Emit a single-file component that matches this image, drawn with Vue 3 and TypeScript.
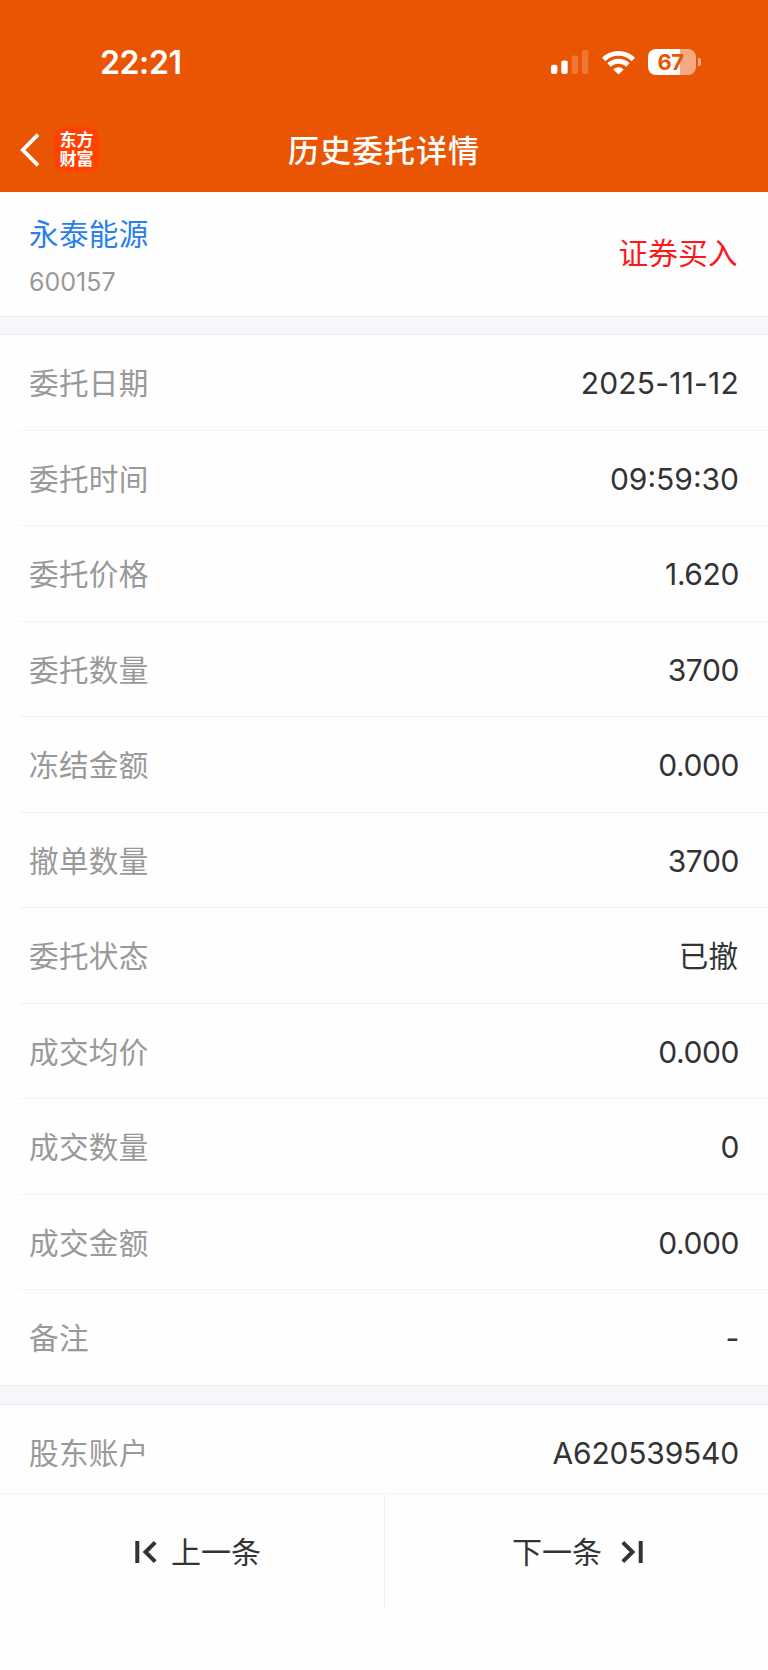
<script setup lang="ts">
interface Field {
  label: string
  value: string
  kind?: 'date' | 'time' | 'text'
}

const fields: Field[] = [
  { label: '委托日期', value: '2025-11-12', kind: 'date' },
  { label: '委托时间', value: '09:59:30', kind: 'time' },
  { label: '委托价格', value: '1.620' },
  { label: '委托数量', value: '3700' },
  { label: '冻结金额', value: '0.000' },
  { label: '撤单数量', value: '3700' },
  { label: '委托状态', value: '已撤', kind: 'text' },
  { label: '成交均价', value: '0.000' },
  { label: '成交数量', value: '0' },
  { label: '成交金额', value: '0.000' },
  { label: '备注', value: '-' },
]
</script>

<template>
  <div class="screen">
    <header class="top">
      <div class="status">
        <span class="clock">22:21</span>
        <div class="indicators">
          <svg class="signal" width="38" height="24" viewBox="0 0 38 24" fill="#fff">
            <rect x="0" y="14.7" width="6.4" height="9.3" rx="2" />
            <rect x="10.3" y="10.6" width="6.4" height="13.4" rx="2" />
            <rect x="20.6" y="5.4" width="6.4" height="18.6" rx="2" opacity=".2" />
            <rect x="31" y="0" width="6.4" height="24" rx="2" opacity=".2" />
          </svg>
          <svg class="wifi" width="33" height="25" viewBox="0 0 33 25">
            <g fill="none" stroke="#fff" stroke-width="4.9">
              <path d="M1.7 9.4A21.3 21.3 0 0 1 31.3 9.4" />
              <path d="M7.1 15A13.5 13.5 0 0 1 25.9 15" />
            </g>
            <path d="M16.5 24.6 11.3 19.4A7.6 7.6 0 0 1 21.7 19.4Z" fill="#fff" />
          </svg>
          <div class="battery">
            <div class="cell"><span class="charge">67</span></div>
            <svg width="3" height="8" viewBox="0 0 3 8"><path d="M0 0A4 4 0 0 1 0 8Z" fill="#fff" opacity=".5" /></svg>
          </div>
        </div>
      </div>
      <nav class="nav">
        <div class="nav-left">
          <svg width="20" height="36" viewBox="0 0 20 36" fill="none" stroke="#fff" stroke-width="3.8">
            <path d="M18 2.6 2.8 18 18 33.4" />
          </svg>
          <div class="logo"><span>东方</span><span>财富</span></div>
        </div>
        <h1>历史委托详情</h1>
      </nav>
    </header>

    <section class="stock">
      <div class="ident">
        <div class="name">永泰能源</div>
        <div class="code">600157</div>
      </div>
      <div class="side">证券买入</div>
    </section>

    <div class="gap"></div>

    <section class="fields">
      <div v-for="f in fields" :key="f.label" class="row">
        <span class="label">{{ f.label }}</span>
        <span class="value" :class="f.kind">{{ f.value }}</span>
      </div>
    </section>

    <div class="gap second"></div>

    <div class="account">
      <span class="label">股东账户</span>
      <span class="value id">A620539540</span>
    </div>

    <footer class="pager">
      <button class="prev" type="button">
        <svg width="22" height="24" viewBox="0 0 22 24" fill="none" stroke="#333" stroke-width="4">
          <path d="M2.3 1V23M20.2 2.3 10.5 12 20.2 21.7" />
        </svg>
        <span>上一条</span>
      </button>
      <button class="next" type="button">
        <span>下一条</span>
        <svg width="22" height="24" viewBox="0 0 22 24" fill="none" stroke="#333" stroke-width="4">
          <path d="M19.7 1V23M1.8 2.3 11.5 12 1.8 21.7" />
        </svg>
      </button>
    </footer>
  </div>
</template>

<style>
body {
  margin: 0;
  background: #fefefe;
}
</style>

<style scoped>
.screen {
  width: 768px;
  height: 1670px;
  overflow: hidden;
  background: #fefefe;
  color: #333;
  font-family: Inter, "Noto Sans CJK SC", sans-serif;
  font-size: 30px;
  line-height: 44px;
}

.top {
  height: 192px;
  background: #ea5504;
  color: #fff;
}

.status {
  display: flex;
  justify-content: space-between;
  height: 108px;
  padding: 0 67.5px 0 100px;
}

.clock {
  padding-top: 41px;
  font-size: 32px;
  font-weight: 600;
  letter-spacing: -0.4px;
}

.indicators {
  display: flex;
  align-items: center;
  height: 26px;
  padding-top: 49px;
}

.wifi {
  margin-left: 13px;
}

.battery {
  display: flex;
  align-items: center;
  gap: 2px;
  margin-left: 13px;
}

.cell {
  width: 48px;
  height: 26px;
  border-radius: 8px;
  background: linear-gradient(90deg, #fff 67%, rgba(255, 255, 255, 0.5) 67%);
  text-align: center;
}

.charge {
  display: block;
  padding-right: 2px;
  color: #ea5504;
  font-size: 22px;
  font-weight: 650;
  letter-spacing: -0.5px;
  line-height: 27px;
}

.nav {
  display: grid;
  grid-template-columns: 1fr auto 1fr;
  align-items: center;
  height: 84px;
}

.nav-left {
  display: flex;
  align-items: center;
  gap: 14px;
  padding-left: 20px;
}

.logo {
  display: flex;
  flex-direction: column;
  justify-content: center;
  width: 45px;
  height: 45px;
  margin-top: -1px;
  border-radius: 10px;
  background: #ff4201;
  font-size: 17px;
  font-weight: 700;
  line-height: 19px;
  text-align: center;
}

h1 {
  margin: 0;
  padding-top: 2px;
  font-size: 31px;
  font-weight: 500;
  letter-spacing: 1px;
}

.stock {
  display: flex;
  align-items: center;
  justify-content: space-between;
  height: 124px;
  padding: 0 30px 0 29px;
}

.ident {
  padding-top: 8px;
}

.name {
  color: #2a80eb;
  font-size: 29.6px;
  letter-spacing: 0.3px;
}

.code {
  margin-top: 4px;
  color: #999;
  font-size: 25px;
}

.side {
  padding-bottom: 2px;
  color: #fc1818;
  font-size: 29.6px;
  letter-spacing: 0.3px;
}

.gap {
  box-sizing: border-box;
  height: 19px;
  border-top: 1px solid #ededf0;
  border-bottom: 1px solid #ededf0;
  background: #f6f7fa;
}

.row,
.account {
  display: flex;
  box-sizing: border-box;
  align-items: center;
  justify-content: space-between;
}

.row {
  height: 95.5px;
  margin-left: 19px;
  padding: 1.5px 29px 0 10px;
  border-bottom: 1px solid #f2f2f3;
}

.row:last-child {
  height: 95px;
  border-bottom: 0;
}

.second {
  height: 20px;
}

.account {
  height: 89px;
  padding: 7.5px 29px 0 29px;
  border-bottom: 1px solid #f4f4f5;
}

.label {
  color: #999;
  font-size: 29.6px;
  letter-spacing: 0.3px;
}

.value {
  letter-spacing: -0.4px;
}

.value.date {
  letter-spacing: 0.2px;
}

.value.time {
  letter-spacing: 0;
}

.value.id {
  letter-spacing: -0.2px;
}

.value.text {
  padding-right: 1px;
  font-size: 29.6px;
  letter-spacing: 0;
}

.pager {
  display: flex;
  height: 113px;
  padding-top: 1px;
}

.pager button {
  display: flex;
  box-sizing: border-box;
  align-items: center;
  width: 384px;
  padding-top: 2px;
  border: 0;
  background: none;
  color: inherit;
  font: inherit;
}

.pager .prev {
  width: 385px;
  gap: 14px;
  padding-left: 135px;
  border-right: 1px solid #f1f1f2;
}

.pager .next {
  width: 383px;
  gap: 19px;
  padding-left: 127px;
}
</style>
